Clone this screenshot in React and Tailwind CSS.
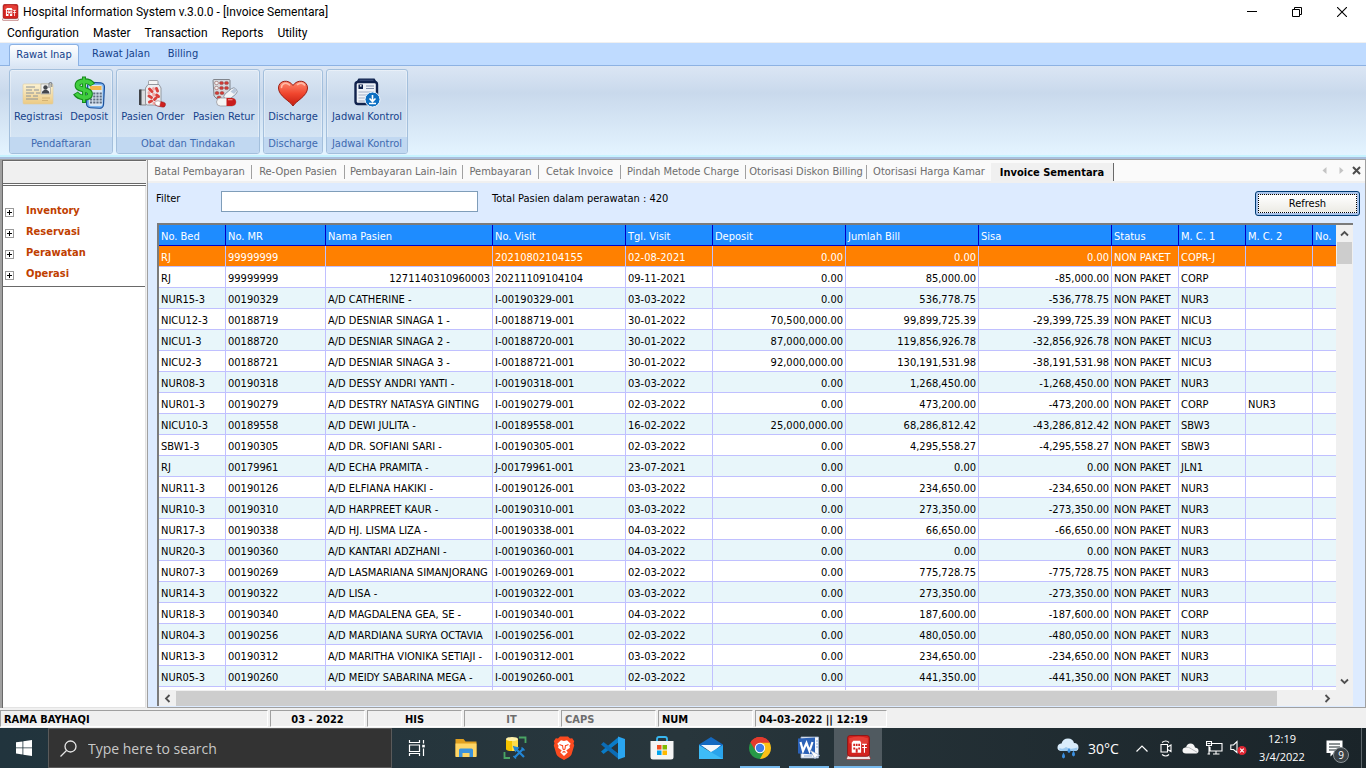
import React from "react";

const menus = ["Configuration", "Master", "Transaction", "Reports", "Utility"];

const columns = [
  { label: "No. Bed", width: "w-[67px]" },
  { label: "No. MR", width: "w-[100px]" },
  { label: "Nama Pasien", width: "w-[167px]" },
  { label: "No. Visit", width: "w-[133px]" },
  { label: "Tgl. Visit", width: "w-[87px]" },
  { label: "Deposit", width: "w-[133px]", num: true },
  { label: "Jumlah Bill", width: "w-[133px]", num: true },
  { label: "Sisa", width: "w-[133px]", num: true },
  { label: "Status", width: "w-[67px]" },
  { label: "M. C. 1", width: "w-[67px]" },
  { label: "M. C. 2", width: "w-[67px]" },
  { label: "No.", width: "w-[67px]" },
];

const rows = [
  ["RJ", "99999999", "", "20210802104155", "02-08-2021", "0.00", "0.00", "0.00", "COPR-J", ""],
  ["RJ", "99999999", "1271140310960003", "20211109104104", "09-11-2021", "0.00", "85,000.00", "-85,000.00", "CORP", ""],
  ["NUR15-3", "00190329", "A/D CATHERINE -", "I-00190329-001", "03-03-2022", "0.00", "536,778.75", "-536,778.75", "NUR3", ""],
  ["NICU12-3", "00188719", "A/D DESNIAR SINAGA 1 -", "I-00188719-001", "30-01-2022", "70,500,000.00", "99,899,725.39", "-29,399,725.39", "NICU3", ""],
  ["NICU1-3", "00188720", "A/D DESNIAR SINAGA 2 -", "I-00188720-001", "30-01-2022", "87,000,000.00", "119,856,926.78", "-32,856,926.78", "NICU3", ""],
  ["NICU2-3", "00188721", "A/D DESNIAR SINAGA 3 -", "I-00188721-001", "30-01-2022", "92,000,000.00", "130,191,531.98", "-38,191,531.98", "NICU3", ""],
  ["NUR08-3", "00190318", "A/D DESSY ANDRI YANTI -", "I-00190318-001", "03-03-2022", "0.00", "1,268,450.00", "-1,268,450.00", "NUR3", ""],
  ["NUR01-3", "00190279", "A/D DESTRY NATASYA GINTING", "I-00190279-001", "02-03-2022", "0.00", "473,200.00", "-473,200.00", "CORP", "NUR3"],
  ["NICU10-3", "00189558", "A/D DEWI JULITA -", "I-00189558-001", "16-02-2022", "25,000,000.00", "68,286,812.42", "-43,286,812.42", "SBW3", ""],
  ["SBW1-3", "00190305", "A/D DR. SOFIANI SARI -", "I-00190305-001", "02-03-2022", "0.00", "4,295,558.27", "-4,295,558.27", "SBW3", ""],
  ["RJ", "00179961", "A/D ECHA PRAMITA -", "J-00179961-001", "23-07-2021", "0.00", "0.00", "0.00", "JLN1", ""],
  ["NUR11-3", "00190126", "A/D ELFIANA HAKIKI -", "I-00190126-001", "03-03-2022", "0.00", "234,650.00", "-234,650.00", "NUR3", ""],
  ["NUR10-3", "00190310", "A/D HARPREET KAUR -", "I-00190310-001", "03-03-2022", "0.00", "273,350.00", "-273,350.00", "NUR3", ""],
  ["NUR17-3", "00190338", "A/D HJ. LISMA LIZA -", "I-00190338-001", "04-03-2022", "0.00", "66,650.00", "-66,650.00", "NUR3", ""],
  ["NUR20-3", "00190360", "A/D KANTARI ADZHANI -", "I-00190360-001", "04-03-2022", "0.00", "0.00", "0.00", "NUR3", ""],
  ["NUR07-3", "00190269", "A/D LASMARIANA SIMANJORANG", "I-00190269-001", "02-03-2022", "0.00", "775,728.75", "-775,728.75", "NUR3", ""],
  ["NUR14-3", "00190322", "A/D LISA -", "I-00190322-001", "03-03-2022", "0.00", "273,350.00", "-273,350.00", "NUR3", ""],
  ["NUR18-3", "00190340", "A/D MAGDALENA GEA, SE -", "I-00190340-001", "04-03-2022", "0.00", "187,600.00", "-187,600.00", "CORP", ""],
  ["NUR04-3", "00190256", "A/D MARDIANA SURYA OCTAVIA", "I-00190256-001", "02-03-2022", "0.00", "480,050.00", "-480,050.00", "NUR3", ""],
  ["NUR13-3", "00190312", "A/D MARITHA VIONIKA SETIAJI -", "I-00190312-001", "03-03-2022", "0.00", "234,650.00", "-234,650.00", "NUR3", ""],
  ["NUR05-3", "00190260", "A/D MEIDY SABARINA MEGA -", "I-00190260-001", "02-03-2022", "0.00", "441,350.00", "-441,350.00", "NUR3", ""],
];

/* ---------- icons ---------- */

function HospitalIcon({ size = 16 }) {
  return (
    <svg width={size} height={size} viewBox="0 0 24 24" aria-hidden="true">
      <path d="M2 19h20l1.500 3.500-1 1h-21l-1-1z" fill="#efe9e9" stroke="#9a2222" strokeWidth=".6" />
      <rect x="1.500" y="0.500" width="21" height="20" rx="2.500" fill="#d3221e" stroke="#8d1010" strokeWidth=".8" />
      <path d="M3 3 Q12 0 21 3 V8 Q12 10 3 8Z" fill="#f0554b" opacity=".55" />
      <path d="M5.500 7.500L7 5.500h6.500l1 2V17h-9z" fill="#fff" />
      <path d="M7 8.500h1.800v2H7z M9.500 8.500h1.600v2H9.500z M11.800 8.500h1.600v2h-1.600z M7 12h1.800v2H7z M11.800 12h1.600v2h-1.600z M9.300 13h1.900v4H9.300z" fill="#d3221e" />
      <path d="M15.500 9h4.500 M15.500 12h4.500 M17.700 8.500v8.500" stroke="#fff" strokeWidth="1.100" />
    </svg>
  );
}

function RegistrasiIcon() {
  return (
    <svg width="32" height="32" viewBox="0 0 32 32" aria-hidden="true">
      <defs>
        <linearGradient id="paper" x1="0" y1="0" x2="0" y2="1">
          <stop offset="0" stopColor="#fbf2d3" />
          <stop offset="1" stopColor="#ecca83" />
        </linearGradient>
      </defs>
      <rect x="1" y="7" width="30" height="20" rx="1" fill="url(#paper)" stroke="#e0cda0" strokeWidth=".6" />
      <path d="M4 10h9M4 13h6M12 13h5M4 16h8M14 16h4M4 19h5M11 19h5M4 22h12" stroke="#8a9298" strokeWidth="1" />
      <path d="M20 21h8M20 23.500h6" stroke="#d3b273" strokeWidth="1" />
      <rect x="19" y="7" width="9.500" height="10" fill="#f4f4f2" stroke="#9a9a90" strokeWidth=".6" />
      <circle cx="23.500" cy="10.500" r="2.200" fill="#42464c" />
      <path d="M19.800 16.500c0-5 7.600-5 7.600 0z" fill="#42464c" />
      <path d="M27 11V6.500q1.800-2 2.800 0V10" fill="none" stroke="#7d828a" strokeWidth="1.100" />
    </svg>
  );
}

function DepositIcon() {
  return (
    <svg width="34" height="34" viewBox="0 0 34 34" aria-hidden="true">
      <rect x="15" y="6.500" width="17" height="25.500" rx="4" fill="#7db6f0" stroke="#1b4f9a" strokeWidth="1.200" transform="rotate(3 23 19)" />
      <rect x="17" y="9" width="13.500" height="21" rx="2" fill="#dbe7f3" />
      <rect x="18" y="10" width="11.500" height="4" fill="#f3b64c" />
      <path d="M18 17.500h12M18 20.500h12M18 23.500h12M18 26.500h12" stroke="#5d6c80" strokeWidth="2" strokeDasharray="2.200 1" />
      <path d="M20.500 9C17.500 3.500 5.500 4 5.500 9.500C5.500 14.500 18 12.500 18 18C18 23.500 7 22.500 3.500 17" fill="none" stroke="#168a1c" strokeWidth="5.800" />
      <path d="M12 .500v26.500" stroke="#168a1c" strokeWidth="4" />
      <path d="M20 8.500C17 3.800 5.500 4.500 5.500 9.500C5.500 14.500 18 12.500 18 18C18 23 7.500 22 4.200 17.500" fill="none" stroke="#41ce3f" strokeWidth="3.800" />
      <path d="M12 1.500v24.500" stroke="#41ce3f" strokeWidth="2.200" />
    </svg>
  );
}

function OrderIcon() {
  return (
    <svg width="32" height="32" viewBox="0 0 32 32" aria-hidden="true">
      <path d="M3 13h6v15H3z" fill="#d9dce0" stroke="#777" strokeWidth=".8" />
      <path d="M2 12.500h2.500v15.500H2z" fill="#3f4247" />
      <rect x="11.500" y="3.500" width="9.500" height="4" rx="1" fill="#f4f4f4" stroke="#8b8e93" strokeWidth=".8" />
      <path d="M11 7.500h11l2 3.500v15q0 2-2 2H10.500q-2 0-2-2V11z" fill="#eceef1" stroke="#8d9197" strokeWidth=".9" />
      <g strokeWidth="3" strokeLinecap="round">
        <path d="M12.500 12l2.500 2.500M19.500 11.500l1 2.500M12 19l2.500 1.500M19.500 18l2 1.500M12.500 25l2-1M17.500 22.500l1.500-1.500" stroke="#d9423d" />
        <path d="M16.500 11.500v.500M16.500 17l.500 1M17 26v.500M12 15.500v.500" stroke="#f2a8a5" />
      </g>
      <rect x="18" y="24.500" width="10.500" height="5" rx="2.500" fill="#cf2020" stroke="#8e1717" strokeWidth=".5" transform="rotate(12 23 27)" />
      <path d="M18 26q0-2 3-2l2.500.400-1 4.500-2.500-.500q-2-.700-2-2.400z" fill="#fff" stroke="#b8b8b8" strokeWidth=".4" />
    </svg>
  );
}

function ReturIcon() {
  return (
    <svg width="32" height="32" viewBox="0 0 32 32" aria-hidden="true">
      <path d="M5 3.500Q5 2.500 6 2.500h15q1 0 1 1V18l-8 6-4.500-1.500L6 19z" fill="#d4d8dd" stroke="#777b82" strokeWidth=".9" />
      <g fill="#d33a35" stroke="#8c4644" strokeWidth=".5">
        <ellipse cx="8.500" cy="6" rx="2" ry="1.600" fill="#f4f4f4" /><ellipse cx="13.500" cy="6" rx="2" ry="1.600" /><ellipse cx="18.500" cy="6" rx="2" ry="1.600" />
        <ellipse cx="8.500" cy="11" rx="2" ry="1.600" fill="#f4f4f4" /><ellipse cx="13.500" cy="11" rx="2" ry="1.600" /><ellipse cx="18.500" cy="11" rx="2" ry="1.600" />
        <ellipse cx="9" cy="16" rx="2" ry="1.600" /><ellipse cx="14" cy="16" rx="2" ry="1.600" /><ellipse cx="11" cy="20.500" rx="2" ry="1.500" />
      </g>
      <rect x="15" y="13.500" width="15" height="7" rx="3.500" fill="#f3f5f8" stroke="#8a93a1" strokeWidth=".9" transform="rotate(-40 22.500 17)" />
      <path d="M22.500 14.500l3-2.600q3-1.500 3 1t-2.500 4z" fill="#b9c8dc" />
      <rect x="8.500" y="21" width="19.500" height="8" rx="4" fill="#f5f5f5" stroke="#99999f" strokeWidth=".8" />
      <path d="M18.500 21h5.500q4 .500 4 4T24 29h-5.500z" fill="#c81c1c" />
      <path d="M20 22.700h4.500" stroke="#f28b86" strokeWidth="1.200" />
    </svg>
  );
}

function HeartIcon() {
  return (
    <svg width="32" height="32" viewBox="0 0 32 32" aria-hidden="true">
      <defs>
        <linearGradient id="heart" x1="0" y1="0" x2="0" y2="1">
          <stop offset="0" stopColor="#ff8a70" />
          <stop offset=".5" stopColor="#f0462e" />
          <stop offset="1" stopColor="#c41c10" />
        </linearGradient>
      </defs>
      <path d="M16 29C13 24 1.500 19 1.500 11C1.500 3 12 2 16 8.500C20 2 30.500 3 30.500 11C30.500 19 19 24 16 29Z" fill="url(#heart)" stroke="#9c1d12" strokeWidth="1" />
      <path d="M4.500 10.500c0-4.500 5-5.500 8-2.500M20.500 7.500q4.500-3 7 .500" fill="none" stroke="#ffb9a6" strokeWidth="1.600" strokeLinecap="round" />
    </svg>
  );
}

function JadwalIcon() {
  return (
    <svg width="32" height="32" viewBox="0 0 32 32" aria-hidden="true">
      <rect x="4.500" y="5" width="21.500" height="22" rx="2.500" fill="#eef2f8" stroke="#10224d" strokeWidth="2.400" />
      <path d="M7.500 1.500h16L26 5.500H5z" fill="#10224d" />
      <path d="M8.500 3.200h14" stroke="#5f7099" strokeWidth=".7" />
      <path d="M7.500 7.500h4.500V12H7.500z" fill="#10224d" />
      <circle cx="9.800" cy="8.800" r=".9" fill="#fff" />
      <path d="M15 9h8M15 11.500h8" stroke="#7d8aa8" strokeWidth="1" />
      <path d="M7.500 15h15.500M7.500 18h10M7.500 21h7.500M7.500 24h6.500" stroke="#a3aec4" strokeWidth="1.200" />
      <circle cx="21.500" cy="22.500" r="7.500" fill="#0d6fc2" stroke="#f1f7ff" strokeWidth="1" />
      <path d="M21.500 18v6M18.500 21.500l3 3 3-3M18 26.500h7" fill="none" stroke="#fff" strokeWidth="1.600" />
    </svg>
  );
}

const ribbonGroups = [
  { title: "Pendaftaran", width: "w-[104px]", items: [["Registrasi", RegistrasiIcon], ["Deposit", DepositIcon]] },
  { title: "Obat dan Tindakan", width: "w-[144px]", items: [["Pasien Order", OrderIcon], ["Pasien Retur", ReturIcon]] },
  { title: "Discharge", width: "w-[60px]", items: [["Discharge", HeartIcon]] },
  { title: "Jadwal Kontrol", width: "w-[82px]", items: [["Jadwal Kontrol", JadwalIcon]] },
];

const docTabs = [
  ["Batal Pembayaran", "w-[104px]"],
  ["Re-Open Pasien", "w-[93px]"],
  ["Pembayaran Lain-lain", "w-[118px]"],
  ["Pembayaran", "w-[76px]"],
  ["Cetak Invoice", "w-[82px]"],
  ["Pindah Metode Charge", "w-[125px]"],
  ["Otorisasi Diskon Billing", "w-[121px]"],
  ["Otorisasi Harga Kamar", "w-[124px]"],
];

/* ---------- window chrome ---------- */

function TitleBar() {
  return (
    <header className="flex h-[22px] shrink-0 items-center bg-white pl-[2px] pt-[2px] font-[Roboto,sans-serif] text-[12px] text-black">
      <HospitalIcon size={17} />
      <h1 className="ml-[4px] whitespace-nowrap">Hospital Information System v.3.0.0 - [Invoice Sementara]</h1>
      <div className="ml-auto mr-[2px] flex">
        <button aria-label="Minimize" className="flex h-[20px] w-[45px] items-center justify-center">
          <svg width="10" height="10" viewBox="0 0 10 10"><path d="M0 4.500h10" stroke="#000" /></svg>
        </button>
        <button aria-label="Restore" className="flex h-[20px] w-[45px] items-center justify-center">
          <svg width="10" height="10" viewBox="0 0 10 10" fill="none" stroke="#000"><path d="M.5 2.500h7v7h-7zM2.500 2.500v-2h7v7h-2" /></svg>
        </button>
        <button aria-label="Close" className="flex h-[20px] w-[45px] items-center justify-center">
          <svg width="10" height="10" viewBox="0 0 10 10"><path d="M0 0l10 10M10 0L0 10" stroke="#000" strokeWidth="1.100" /></svg>
        </button>
      </div>
    </header>
  );
}

function MenuBar() {
  return (
    <nav className="flex h-[21px] shrink-0 items-center gap-[14px] border-b border-[#f0f0f0] bg-white pl-[7px] pt-[2px] font-[Roboto,sans-serif] text-[12px] text-black">
      {menus.map((m) => (
        <button key={m}>{m}</button>
      ))}
    </nav>
  );
}

function Ribbon() {
  return (
    <section className="shrink-0 bg-[#bfdbff] text-[11px] text-[#15428b]">
      <div className="flex h-[23px] border-b border-[#8db2e3] pl-[9px]">
        <button className="-mb-px mt-[1px] h-[22px] w-[70px] rounded-t-[3px] border border-b-0 border-[#8db2e3] bg-linear-to-b from-white to-[#dbe7f6]">Rawat Inap</button>
        <button className="ml-[6px] w-[72px] pt-[1px]">Rawat Jalan</button>
        <button className="ml-[6px] w-[40px] pt-[1px]">Billing</button>
      </div>
      <div className="flex h-[89px] gap-[3px] bg-linear-to-b from-[#dbe6f4] via-[#c9d9ec] via-30% to-[#e4f4ff] pl-[9px] pt-[3px]">
        {ribbonGroups.map((g) => (
          <div key={g.title} className={`flex h-[85px] flex-col rounded-[3px] border border-[#a3bfdc] bg-linear-to-b from-[#dde8f4] via-[#c9d9ec] via-35% to-[#d9e9f7] shadow-[inset_0_0_0_1px_rgba(255,255,255,0.35)] ${g.width}`}>
            <div className="flex flex-1 justify-around pt-[6px]">
              {g.items.map(([label, Icon]) => (
                <button key={label} className="flex flex-col items-center whitespace-nowrap">
                  <span className="flex h-[33px] items-center"><Icon /></span>
                  <span className="leading-[15px]">{label}</span>
                </button>
              ))}
            </div>
            <div className="h-[16px] rounded-b-[2px] bg-[#c1d8f1] text-center leading-[14px] text-[#3e6ab0]">{g.title}</div>
          </div>
        ))}
      </div>
      <div className="h-[2px] bg-[#c6f3ff]" />
      <div className="h-[2px] bg-[#a9bfdd]" />
    </section>
  );
}

function Sidebar() {
  return (
    <aside className="flex w-[147px] shrink-0 flex-col border-l-2 border-t border-[#a0a0a0] bg-[#f0f0f0] pr-[1px]">
      <div className="flex flex-1 flex-col border-l border-t border-[#696969]">
        <div className="h-[22px] border-t border-[#f8f8f8] bg-[#f0f0f0]" />
        <div className="h-[3px] border-y border-[#696969] bg-white" />
        <div className="flex-1 border-b border-r border-[#e3e3e3] bg-white">
          <ul className="border-b border-[#696969] pb-[1px] pt-[15px]">
            {["Inventory", "Reservasi", "Perawatan", "Operasi"].map((t) => (
              <li key={t} className="flex h-[21px] items-center pl-[2px]">
                <button aria-label={`Expand ${t}`} className="mt-[2px] flex h-[9px] w-[9px] items-center justify-center border border-[#9a9a9a] bg-white">
                  <svg width="5" height="5" viewBox="0 0 5 5"><path d="M0 2.500h5M2.500 0v5" stroke="#000" /></svg>
                </button>
                <a href="#" className="ml-[12px] text-[11px] font-bold text-[#c04000]">{t}</a>
              </li>
            ))}
          </ul>
        </div>
      </div>
    </aside>
  );
}

function DocTabs() {
  return (
    <nav className="flex h-[23px] shrink-0 border-b-2 border-[#f0f0f0] bg-[#fafafa] text-[11px] text-[#6d6d6d]">
      {docTabs.map(([label, w], i) => (
        <button key={label} className={`flex items-center justify-center whitespace-nowrap pt-[2px] ${w}`}>
          <span className={`h-[14px] w-full leading-[14px] ${i < docTabs.length - 1 ? "border-r border-[#a0a0a0]" : ""}`}>{label}</span>
        </button>
      ))}
      <button className="mt-[3px] w-[123px] whitespace-nowrap border-r border-[#696969] bg-[#f0f0f0] font-bold leading-[17px] text-black">Invoice Sementara</button>
      <div className="ml-auto flex items-center gap-[12px] pr-[4px]">
        <button aria-label="Previous tab"><svg width="5" height="7" viewBox="0 0 5 7"><path d="M4.500 0v7L.500 3.500z" fill="#c4c4c4" /></svg></button>
        <button aria-label="Next tab"><svg width="5" height="7" viewBox="0 0 5 7"><path d="M.500 0v7l4-3.500z" fill="#c4c4c4" /></svg></button>
        <button aria-label="Close tab" className="-ml-[4px]"><svg width="9" height="9" viewBox="0 0 9 9"><path d="M1 1l7 7M8 1L1 8" stroke="#4c4c4c" strokeWidth="2" /></svg></button>
      </div>
    </nav>
  );
}

function Chevron({ d }) {
  return (
    <svg width="9" height="9" viewBox="0 0 9 9"><path d={d} fill="none" stroke="#505050" strokeWidth="1.800" /></svg>
  );
}

function PatientTable() {
  return (
    <div className="mb-[1px] ml-[9px] mr-[12px] flex min-h-0 flex-1 flex-col border-l-2 border-t-2 border-[#7b7b7b] bg-[#f0f0f0]">
      <div className="flex min-h-0 flex-1">
        <div className="min-w-0 flex-1 overflow-hidden bg-white">
          <table className="w-[1221px] table-fixed border-separate border-spacing-0 text-[11px] leading-[14px]">
            <colgroup>
              {columns.map((c) => <col key={c.label} className={c.width} />)}
            </colgroup>
            <thead>
              <tr className="h-[21px] bg-[#1e8cff] text-left text-white">
                {columns.map((c) => (
                  <th key={c.label} className="overflow-hidden whitespace-nowrap border-b border-r border-[#0000c8] px-[2px] pb-0 pt-[3px] font-normal">{c.label}</th>
                ))}
              </tr>
            </thead>
            <tbody>
              {rows.map((r, i) => {
                const cells = [...r.slice(0, 8), "NON PAKET", r[8], r[9], ""];
                const tone = i === 0 ? "bg-[#ff8000] text-white" : i % 2 === 0 ? "bg-[#e8f6fa] text-black" : "bg-white text-black";
                return (
                  <tr key={i} className={`h-[21px] ${tone}`}>
                    {cells.map((c, j) => (
                      <td key={j} className={`overflow-hidden whitespace-nowrap border-b border-r border-[#c0c0ff] px-[2px] pb-0 pt-[3px] ${columns[j].num || (j === 2 && i === 1) ? "text-right" : ""}`}>{c}</td>
                    ))}
                  </tr>
                );
              })}
              <tr className="h-[21px] bg-white">
                {columns.map((c) => <td key={c.label} className="border-b border-r border-[#c0c0ff] p-0" />)}
              </tr>
            </tbody>
          </table>
        </div>
        <div className="flex w-[17px] shrink-0 flex-col items-center bg-[#f0f0f0]">
          <button aria-label="Scroll up" className="flex h-[17px] items-center"><Chevron d="M1 6.500l3.500-3.500 3.500 3.500" /></button>
          <div className="h-[22px] w-[15px] bg-[#cdcdcd]" />
          <button aria-label="Scroll down" className="mt-auto flex h-[17px] items-center"><Chevron d="M1 2.500l3.500 3.500 3.500-3.500" /></button>
        </div>
      </div>
      <div className="mr-[17px] flex h-[16px] shrink-0 items-center bg-[#f0f0f0]">
        <button aria-label="Scroll left" className="flex w-[17px] justify-center"><Chevron d="M6.500 1L3 4.500 6.500 8" /></button>
        <div className="mr-[42px] h-[15px] flex-1 bg-[#cdcdcd]" />
        <button aria-label="Scroll right" className="flex w-[17px] justify-center"><Chevron d="M2.500 1L6 4.500 2.500 8" /></button>
      </div>
    </div>
  );
}

function Content() {
  return (
    <main className="flex min-w-0 flex-1 flex-col border border-[#a0a0a0] bg-[#ddebff]">
      <DocTabs />
      <div className="flex h-[40px] shrink-0 items-start pl-[8px] pr-[5px] pt-[8px] text-[11px] text-black">
        <label htmlFor="filter" className="w-[65px]">Filter</label>
        <input id="filter" type="text" className="h-[21px] w-[257px] border border-[#7f9db9] bg-white px-[3px] outline-none" />
        <p className="ml-[14px]">Total Pasien dalam perawatan : 420</p>
        <button className="ml-auto h-[25px] w-[105px] rounded-[3px] border border-[#003c74] bg-[#a9c4ec] p-[2px]">
          <span className="flex h-full items-center justify-center border border-dotted border-black bg-linear-to-b from-white to-[#ecebe5] pt-[2px]">Refresh</span>
        </button>
      </div>
      <PatientTable />
    </main>
  );
}

function StatusBar() {
  const cells = [
    ["RAMA BAYHAQI", "w-[268px] text-left text-black"],
    ["03 - 2022", "w-[95px] text-center text-black"],
    ["HIS", "w-[95px] text-center text-black"],
    ["IT", "w-[95px] text-center text-[#6d6d6d]"],
    ["CAPS", "w-[95px] text-left text-[#6d6d6d]"],
    ["NUM", "w-[95px] text-left text-black"],
    ["04-03-2022 || 12:19", "w-[132px] text-left text-black"],
  ];
  return (
    <footer className="flex h-[20px] shrink-0 gap-[2px] bg-[#f0f0f0] pb-[1px] pt-[2px] text-[11px] font-bold">
      {cells.map(([t, c]) => (
        <div key={t} className={`whitespace-nowrap border border-b-white border-l-[#a0a0a0] border-r-white border-t-[#a0a0a0] px-[3px] leading-[17px] ${c}`}>{t}</div>
      ))}
    </footer>
  );
}

/* ---------- taskbar ---------- */

function ExplorerIcon() {
  return (
    <svg width="24" height="24" viewBox="0 0 24 24">
      <path d="M1.500 3h8l2 2.500h11V20h-21z" fill="#e0a020" />
      <path d="M1.500 7.500h21V21h-21z" fill="#ffd666" />
      <path d="M5 21v-7q0-1.500 1.500-1.500h11Q19 12.500 19 14v7h-3.500v-4h-7v4z" fill="#3b93dd" />
    </svg>
  );
}

function DatabaseToolIcon() {
  return (
    <svg width="24" height="24" viewBox="0 0 24 24">
      <path d="M16 1.500h6.500V7M1.500 16v6H7" fill="none" stroke="#4aa564" strokeWidth="1.800" />
      <path d="M3 3v10q0 2 6 2t6-2V3z" fill="#f6c400" />
      <path d="M9 3h6v10q0 2-6 2z" fill="#ffdc4a" />
      <ellipse cx="9" cy="3" rx="6" ry="2" fill="#fff0a8" />
      <path d="M12.500 12.500l8.500 8.500M20.500 12.500l-8.500 8.500" stroke="#2386d6" strokeWidth="2.200" />
      <path d="M11 11l4 1-2.500 3zM18.500 11.500l3 3M10.500 20l2.500 2.500" stroke="#2386d6" strokeWidth="1.600" fill="#2386d6" />
    </svg>
  );
}

function BraveIcon() {
  return (
    <svg width="24" height="24" viewBox="0 0 24 24">
      <path d="M8 .500h8l2 2 2.200-.300 2 3-.700 2 .700 2.300-2.700 9q-.700 1.500-3 3L12 24l-4.500-2.500q-2.300-1.500-3-3l-2.700-9 .700-2.300-.700-2 2-3 2.200.300z" fill="#fb4a1f" />
      <path d="M12 5l3-.800 3.700 3.600-1.300 2 .500 2-3.700 2.700 1.600 1.800L12 20l-3.800-3.700 1.600-1.800-3.700-2.700.500-2-1.300-2L9 4.200z" fill="#fff" />
      <path d="M7.500 8.500l3 1.200M16.500 8.500l-3 1.200M10.500 9l.500 4 1 .700 1-.700.500-4M10.500 16.500l1.500-1 1.500 1" fill="none" stroke="#fb4a1f" strokeWidth="1.100" />
    </svg>
  );
}

function CodeIcon() {
  return (
    <svg width="24" height="24" viewBox="0 0 24 24">
      <path d="M17.500 1L0 15.500l2.500 2.500L18 6z" fill="#0a7cc8" />
      <path d="M17.500 23L0 8.500 2.500 6 18 18z" fill="#0c6cb5" />
      <path d="M17 0.500L24 3v18l-7 2.500z" fill="#2aa5f0" />
      <path d="M17 7v10l-6.500-5z" fill="#26353d" />
    </svg>
  );
}

function StoreIcon() {
  return (
    <svg width="24" height="24" viewBox="0 0 24 24">
      <path d="M7 6V3q0-2 2-2h6q2 0 2 2v3" fill="none" stroke="#38b7f0" strokeWidth="1.800" />
      <path d="M.500 5h23v16q0 2.500-2.500 2.500H3Q.500 23.500.500 21z" fill="#f4f4f4" />
      <path d="M7 9h4.500v4.500H7z" fill="#f25022" /><path d="M12.500 9H17v4.500h-4.500z" fill="#7fba00" />
      <path d="M7 14.500h4.500V19H7z" fill="#00a4ef" /><path d="M12.500 14.500H17V19h-4.500z" fill="#ffb900" />
    </svg>
  );
}

function MailIcon() {
  return (
    <svg width="24" height="24" viewBox="0 0 24 24">
      <path d="M0 8.500L12 1l12 7.500V12H0z" fill="#1469c0" />
      <path d="M2 9h20l-9 8z" fill="#f3f7fb" />
      <path d="M24 9v14H0z" fill="#2aa4ec" />
      <path d="M0 9l12.500 7.500L24 23H0z" fill="#3ebcf7" />
    </svg>
  );
}

function ChromeIcon() {
  return (
    <svg width="24" height="24" viewBox="0 0 24 24">
      <path d="M12 12L2.474 6.500A11 11 0 0 1 21.526 6.500z" fill="#e33b2e" />
      <path d="M12 12V1.500L21.526 6.500A11 11 0 0 1 12 23z" fill="#fbc116" />
      <path d="M12 12l4.500 2.700L12 23A11 11 0 0 1 2.474 6.500z" fill="#279847" />
      <path d="M12 6.800h9.700A11 11 0 0 0 2.474 6.500L7.500 14.500z" fill="#e33b2e" />
      <circle cx="12" cy="12" r="5.200" fill="#fff" />
      <circle cx="12" cy="12" r="4.200" fill="#3f7de8" />
    </svg>
  );
}

function WordIcon() {
  return (
    <svg width="24" height="24" viewBox="0 0 24 24">
      <path d="M4 1h17.500v21H4z" fill="#f5f8fc" stroke="#9fb3cf" strokeWidth=".8" />
      <path d="M19 5h2M19 8h2M19 11h2M7 20h8" stroke="#8fabd4" strokeWidth="1.200" />
      <path d="M1 2.500l17-1V18.500L1 17.500z" fill="#2b62b8" />
      <path d="M3.500 6l2.500 9L9.500 7l3 8L15.500 6" fill="none" stroke="#fff" strokeWidth="2.200" />
      <path d="M13 14l10 5.500-3.500 1-1.500 2.500z" fill="#fff" stroke="#7f9cc9" strokeWidth=".6" />
    </svg>
  );
}

function WindowsTaskView() {
  return (
    <svg width="18" height="16" viewBox="0 0 18 16" fill="none" stroke="#fff" strokeWidth="1.200">
      <path d="M1.500 5h10v6.500h-10zM1.500 0v2.500h10V0M1.500 16v-2.500h10V16M15.500 0v3.500M15.500 8.500V16" />
      <path d="M14.200 4.800h2.600v2.600h-2.600z" fill="#fff" stroke="none" />
    </svg>
  );
}

const apps = [
  { name: "Task View", icon: <WindowsTaskView /> },
  { name: "File Explorer", icon: <ExplorerIcon /> },
  { name: "Database Tools", icon: <DatabaseToolIcon /> },
  { name: "Brave", icon: <BraveIcon /> },
  { name: "Visual Studio Code", icon: <CodeIcon /> },
  { name: "Store", icon: <StoreIcon /> },
  { name: "Mail", icon: <MailIcon /> },
  { name: "Chrome", icon: <ChromeIcon />, open: true },
  { name: "Word", icon: <WordIcon />, open: true },
  { name: "Hospital Information System", icon: <HospitalIcon size={25} />, active: true },
];

function Taskbar() {
  return (
    <footer className="flex h-[40px] shrink-0 bg-linear-to-r from-[#21343d] via-[#28363c] via-50% to-[#1a2429] font-['Open_Sans',sans-serif] text-white">
      <button aria-label="Start" className="flex w-[48px] items-center justify-center">
        <svg width="16" height="16" viewBox="0 0 16 16"><path d="M0 2.300L6.500 1.400V7.500H0zM7.300 1.300L16 0v7.500H7.300zM0 8.300h6.500v6.200L0 13.600zM7.300 8.300H16V16l-8.700-1.300z" fill="#fff" /></svg>
      </button>
      <label className="flex w-[344px] items-center border border-[#5a5a5a] bg-[#333333] pl-[11px]">
        <svg width="17" height="17" viewBox="0 0 17 17" fill="none" stroke="#e6e6e6" strokeWidth="1.300" className="shrink-0"><circle cx="10.500" cy="6.500" r="5.500" /><path d="M6.500 10.500L.500 16.500" /></svg>
        <input aria-label="Search" placeholder="Type here to search" className="ml-[11px] w-full bg-transparent text-[14px] text-white outline-none placeholder:text-[#c8c8c8]" />
      </label>
      <div className="flex gap-[1px] pl-[1px]">
        {apps.map((a) => (
          <button key={a.name} aria-label={a.name} className={`flex w-[48px] flex-col items-center ${a.active ? "bg-[#505a60]" : ""}`}>
            <span className="flex h-[38px] items-center pt-[1px]">{a.icon}</span>
            {a.open && <span className="h-[2px] w-[40px] bg-[#76b9ed]" />}
            {a.active && <span className="h-[2px] w-full bg-[#76b9ed]" />}
          </button>
        ))}
      </div>
      <div className="ml-auto flex items-stretch">
        <button className="flex w-[73px] items-center gap-[9px] text-[14px]">
          <svg width="22" height="21" viewBox="0 0 22 21">
            <path d="M5 13Q0 13 0.500 9Q1 5.500 4.500 5.500Q6 0.500 11 0.500Q16 .500 17 5Q21.500 5 21.500 9.500Q21.500 13 17.500 13z" fill="#d9ecfb" />
            <path d="M6 13Q1.500 13 2.500 10Q6 12 9 9Q13 12 20.500 9.500Q21 13 17.500 13z" fill="#9bc8ee" />
            <path d="M12 10q3 4 0 5q-3-1 0-5zM6.500 14.500q3 5 0 6q-3-1 0-6zM16.500 12.500q3 5 0 6q-3-1 0-6z" fill="#3a8fe0" />
          </svg>
          <span>30°C</span>
        </button>
        <button aria-label="Show hidden icons" className="flex w-[24px] items-center justify-center"><svg width="12" height="7" viewBox="0 0 12 7"><path d="M.500 6.500L6 1l5.500 5.500" fill="none" stroke="#fff" strokeWidth="1.200" /></svg></button>
        <button aria-label="Meet now" className="flex w-[24px] items-center justify-center"><svg width="12" height="17" viewBox="0 0 12 17" fill="none" stroke="#fff" strokeWidth="1.100"><path d="M1 4.500h6.500v7.500H1zM7.500 7l3.500-2v6.500l-3.500-2M2 2.500Q6 -.500 9 2.500M2 14.500q4 3 7 0" /></svg></button>
        <button aria-label="OneDrive" className="flex w-[24px] items-center justify-center"><svg width="17" height="11" viewBox="0 0 17 11"><path d="M4 10.500Q.500 10.500.500 7.500T4 4.500Q5 .500 8.500.500T13 4.500Q16.500 5 16.500 7.800T14 10.500z" fill="#f5f5f5" /><path d="M3.500 4.500Q7 3.500 9.500 6l6 3.500" fill="none" stroke="#b9bcbe" strokeWidth="1" /></svg></button>
        <button aria-label="Network" className="flex w-[24px] items-center justify-center"><svg width="17" height="14" viewBox="0 0 17 14" fill="none" stroke="#fff" strokeWidth="1.100"><path d="M6 2.500h10v7.500H4V6M10 10v3M7 13h6.500M.500.500h5v4h-5zM3 4.500V13M1.500 2.500h3M1.500 13H4" /></svg></button>
        <button aria-label="Volume muted" className="flex w-[24px] items-center justify-center"><svg width="17" height="16" viewBox="0 0 17 16"><path d="M.800 5h2.700L7 1.500v11L3.500 9.500H.800z" fill="none" stroke="#fff" strokeWidth="1.100" /><circle cx="12" cy="10.500" r="4.500" fill="#e02532" /><path d="M10.200 8.700l3.600 3.600M13.800 8.700l-3.600 3.600" stroke="#fff" strokeWidth="1.100" /></svg></button>
        <button className="flex w-[64px] flex-col items-center pt-[2px] text-[11px] leading-[18px]">
          <span>12:19</span>
          <span>3/4/2022</span>
        </button>
        <button aria-label="Notifications" className="relative flex w-[40px] items-center justify-center">
          <svg width="17" height="17" viewBox="0 0 17 17"><path d="M.500.500h16v12.500H8L4.500 16.500V13h-4z" fill="#fff" /><path d="M3 4h11M3 7h11M3 10h7" stroke="#1b262b" strokeWidth="1.100" /></svg>
          <span className="absolute left-[19px] top-[19px] flex h-[16px] w-[16px] items-center justify-center rounded-full border border-[#8b9297] bg-[#3a4145] text-[10px]">9</span>
        </button>
        <div className="w-[12px]"><div className="ml-[7px] h-full border-l border-[#5d666b]" /></div>
      </div>
    </footer>
  );
}

export default function App() {
  return (
    <div className="flex h-screen flex-col overflow-hidden bg-[#f0f0f0] font-['DejaVu_Sans_Condensed','Noto_Sans',sans-serif]">
      <TitleBar />
      <MenuBar />
      <Ribbon />
      <div className="flex min-h-0 flex-1">
        <Sidebar />
        <Content />
      </div>
      <StatusBar />
      <Taskbar />
    </div>
  );
}
